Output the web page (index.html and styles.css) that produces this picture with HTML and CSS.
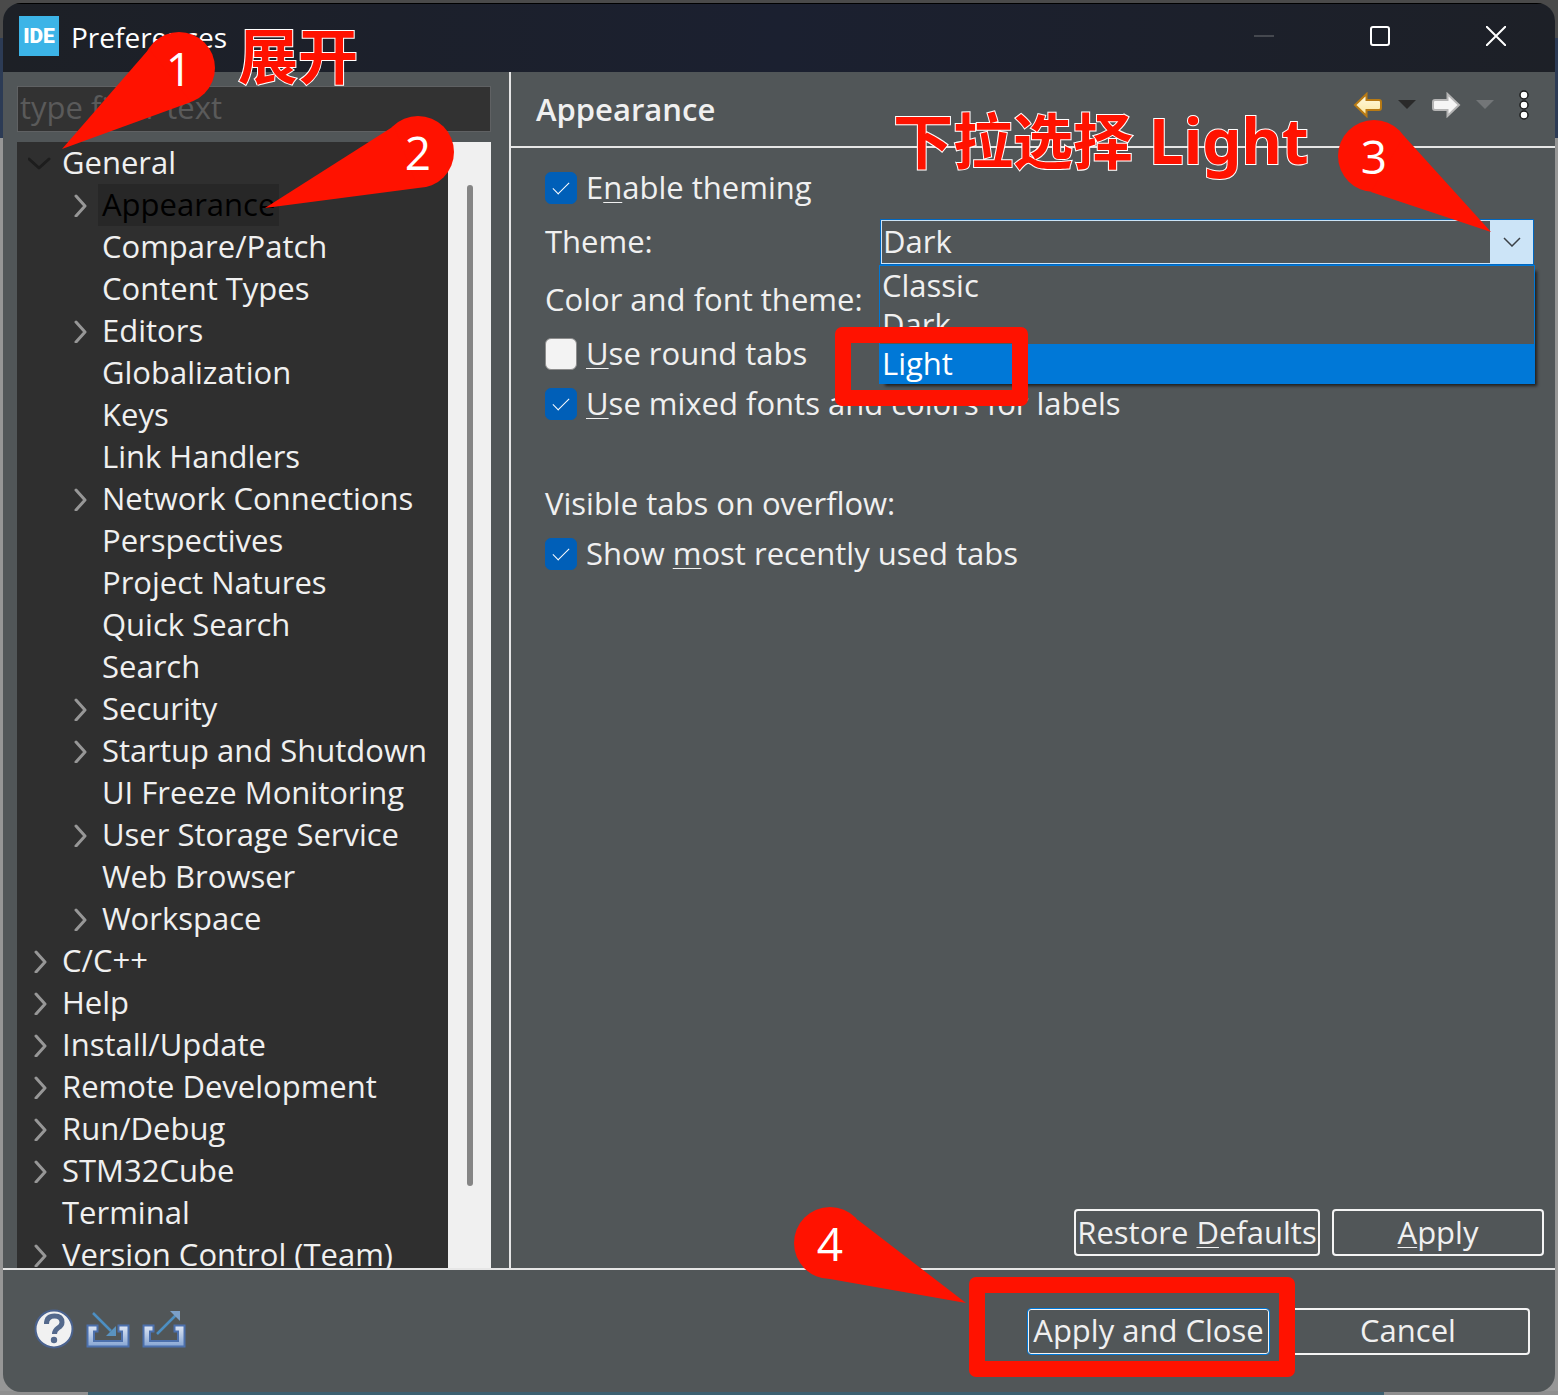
FILE: index.html
```html
<!DOCTYPE html>
<html lang="en">
<head>
<meta charset="utf-8">
<title>Preferences</title>
<link rel="stylesheet" href="styles.css">
</head>
<body>
<svg class="defs" aria-hidden="true">
  <symbol id="chev" viewBox="0 0 24 24"><path d="M8 3l9 10-9 10" fill="none" stroke="currentColor" stroke-width="3" stroke-linecap="round" stroke-linejoin="round"/></symbol>
  <linearGradient id="gold" x1="0" y1="0" x2="0" y2="1"><stop offset="0" stop-color="#fffbe6"/><stop offset="1" stop-color="#fbe59a"/></linearGradient>
  <linearGradient id="tray" x1="0" y1="0" x2="0" y2="1"><stop offset="0" stop-color="#dfe7f5"/><stop offset="1" stop-color="#86a5d3"/></linearGradient>
</svg>
<div class="window">
  <header class="titlebar">
    <span class="logo">IDE</span>
    <h1 class="title">Preferences</h1>
    <div class="controls">
      <button class="control dim" aria-label="Minimize"><svg width="20" height="20"><path d="M0 10h20" stroke="currentColor" stroke-width="2"/></svg></button>
      <button class="control" aria-label="Maximize"><svg width="20" height="20"><rect x="1" y="1" width="18" height="18" rx="2" fill="none" stroke="currentColor" stroke-width="2"/></svg></button>
      <button class="control" aria-label="Close"><svg width="20" height="20"><path d="M0 0l20 20M20 0L0 20" stroke="currentColor" stroke-width="2"/></svg></button>
    </div>
  </header>

  <div class="body">
    <aside class="sidebar">
      <input class="filter" type="text" placeholder="type filter text" aria-label="Filter">
      <div class="treebox">
        <ul class="tree">
          <li class="open"><svg class="chev"><use href="#chev"/></svg><span>General</span></li>
          <li class="sub selected"><svg class="chev"><use href="#chev"/></svg><span>Appearance</span></li>
          <li class="sub leaf"><span>Compare/Patch</span></li>
          <li class="sub leaf"><span>Content Types</span></li>
          <li class="sub"><svg class="chev"><use href="#chev"/></svg><span>Editors</span></li>
          <li class="sub leaf"><span>Globalization</span></li>
          <li class="sub leaf"><span>Keys</span></li>
          <li class="sub leaf"><span>Link Handlers</span></li>
          <li class="sub"><svg class="chev"><use href="#chev"/></svg><span>Network Connections</span></li>
          <li class="sub leaf"><span>Perspectives</span></li>
          <li class="sub leaf"><span>Project Natures</span></li>
          <li class="sub leaf"><span>Quick Search</span></li>
          <li class="sub leaf"><span>Search</span></li>
          <li class="sub"><svg class="chev"><use href="#chev"/></svg><span>Security</span></li>
          <li class="sub"><svg class="chev"><use href="#chev"/></svg><span>Startup and Shutdown</span></li>
          <li class="sub leaf"><span>UI Freeze Monitoring</span></li>
          <li class="sub"><svg class="chev"><use href="#chev"/></svg><span>User Storage Service</span></li>
          <li class="sub leaf"><span>Web Browser</span></li>
          <li class="sub"><svg class="chev"><use href="#chev"/></svg><span>Workspace</span></li>
          <li><svg class="chev"><use href="#chev"/></svg><span>C/C++</span></li>
          <li><svg class="chev"><use href="#chev"/></svg><span>Help</span></li>
          <li><svg class="chev"><use href="#chev"/></svg><span>Install/Update</span></li>
          <li><svg class="chev"><use href="#chev"/></svg><span>Remote Development</span></li>
          <li><svg class="chev"><use href="#chev"/></svg><span>Run/Debug</span></li>
          <li><svg class="chev"><use href="#chev"/></svg><span>STM32Cube</span></li>
          <li class="leaf"><span>Terminal</span></li>
          <li><svg class="chev"><use href="#chev"/></svg><span>Version Control (Team)</span></li>
        </ul>
        <div class="scrollbar"><div class="thumb"></div></div>
      </div>
    </aside>

    <main class="page">
      <div class="pagehead">
        <h2 class="heading">Appearance</h2>
        <div class="nav">
          <button class="icon" aria-label="Back"><svg width="30" height="26"><path d="M2 13L13.500 2v6H26q2 0 2 2v6q0 2-2 2H13.500v6z" fill="url(#gold)" stroke="#b87a14" stroke-width="2"/></svg></button>
          <button class="icon" aria-label="Back history"><svg width="18" height="10"><path d="M0 0h18l-9 9z" fill="#2a2a2a"/></svg></button>
          <button class="icon" aria-label="Forward"><svg width="30" height="26"><path d="M28 13L16.500 2v6H4q-2 0-2 2v6q0 2 2 2h12.500v6z" fill="#f5f5f5" stroke="#b5b5b5" stroke-width="2"/></svg></button>
          <button class="icon" aria-label="Forward history"><svg width="18" height="10"><path d="M0 0h18l-9 9z" fill="#737678"/></svg></button>
          <button class="icon more" aria-label="View menu"><svg width="10" height="30"><g fill="#fff" stroke="#1b1b1b" stroke-width="1.500"><circle cx="5" cy="5" r="4"/><circle cx="5" cy="15" r="4"/><circle cx="5" cy="25" r="4"/></g></svg></button>
        </div>
      </div>

      <form class="form">
        <label class="check"><input type="checkbox" checked><span>E<u>n</u>able theming</span></label>
        <label class="field" for="theme">Theme:</label>
        <div class="combo">
          <select id="theme"><option>Dark</option></select>
          <span class="drop"><svg width="18" height="10"><path d="M1 1l8 8 8-8" fill="none" stroke="#3b4146" stroke-width="1.500"/></svg></span>
          <ul class="options">
            <li>Classic</li>
            <li>Dark</li>
            <li class="active">Light</li>
          </ul>
          <span class="frame frame-light"></span>
        </div>
        <span class="field wide">Color and font theme:</span>
        <label class="check"><input type="checkbox"><span><u>U</u>se round tabs</span></label>
        <label class="check"><input type="checkbox" checked><span><u>U</u>se mixed fonts and colors for labels</span></label>
        <span class="blank"></span>
        <span class="caption">Visible tabs on overflow:</span>
        <label class="check"><input type="checkbox" checked><span>Show <u>m</u>ost recently used tabs</span></label>
      </form>

      <div class="pageactions">
        <button class="btn restore">Restore <u>D</u>efaults</button>
        <button class="btn apply"><u>A</u>pply</button>
      </div>
    </main>
  </div>

  <footer class="footer">
    <div class="tools">
      <button class="icon" aria-label="Help"><svg width="40" height="42" viewBox="0 0 40 42"><circle cx="20" cy="21" r="18.500" fill="#f1f1f1" stroke="#4a628e" stroke-width="2"/><path d="M12.500 16q0-8 8-8 7.500 0 7.500 6.500 0 3-4 5.500-3.500 2.500-3.500 6" fill="none" stroke="#54698c" stroke-width="5"/><circle cx="20" cy="32" r="3.200" fill="#54698c"/></svg></button>
      <button class="icon" aria-label="Import"><svg width="44" height="40" viewBox="0 0 44 40"><path d="M1.500 16.500h10v6H8V32h28v-9.500h-3.500v-6h10v21h-41z" fill="url(#tray)" stroke="#4c70ad" stroke-width="2"/><path d="M7 4l18 18" stroke="#4d8fc3" stroke-width="2.500"/><path d="M30 17v10H20z" fill="#5a92bf"/></svg></button>
      <button class="icon" aria-label="Export"><svg width="44" height="40" viewBox="0 0 44 40"><path d="M1.500 16.500h10v6H8V32h28v-9.500h-3.500v-6h10v21h-41z" fill="url(#tray)" stroke="#4c70ad" stroke-width="2"/><path d="M15 25L34 6" stroke="#4d8fc3" stroke-width="2.500"/><path d="M28 2h10v10z" fill="#7b9fc8"/></svg></button>
    </div>
    <div class="final">
      <button class="btn primary">Apply and Close</button>
      <button class="btn">Cancel</button>
      <span class="frame frame-close"></span>
    </div>
  </footer>

  <svg class="note note-left" width="480" height="220" role="img" aria-label="Steps 1 and 2">
    <g class="pin"><circle cx="176" cy="65" r="36"/><path d="M146 46L59 146 188 99z"/><circle cx="415" cy="149" r="36"/><path d="M391 123L262 205 415 185z"/></g>
    <text class="digit" x="176" y="83">1</text>
    <text class="digit" x="415" y="167">2</text>
    <text class="callout" x="235" y="76">展开</text>
  </svg>
  <svg class="note note-right" width="680" height="240" role="img" aria-label="Step 3">
    <g class="pin"><circle cx="499" cy="153" r="36"/><path d="M529 133L616 229 496 189z"/></g>
    <text class="digit" x="499" y="171">3</text>
    <text class="callout" x="18" y="161">下拉选择<tspan class="latin"> Light</tspan></text>
  </svg>
  <svg class="note note-bottom" width="180" height="110" role="img" aria-label="Step 4">
    <g class="pin"><circle cx="38" cy="38" r="36"/><path d="M66 15L174 98 38 74z"/></g>
    <text class="digit" x="38" y="56">4</text>
  </svg>
</div>
</body>
</html>
```

FILE: styles.css
```css
* {
  box-sizing: border-box;
}

body {
  margin: 0;
  padding: 3px;
  height: 100vh;
  background:
    linear-gradient(90deg, #8f8f8f 88px, #3d6070 88px, #3d6070 calc(100% - 174px), #8f8f8f calc(100% - 174px)) bottom / 100% 4px no-repeat,
    linear-gradient(#4a4a4a 38px, #2c3b55 38px, #2c3b55 138px, #969696 138px);
  color: #f0f0f0;
  font: 31px/40px "Open Sans", "Noto Sans", "Noto Sans CJK SC", sans-serif;
}

button, input, select {
  font: inherit;
  color: inherit;
}

button {
  padding: 0;
  border: 0;
  background: none;
}

svg {
  display: block;
  flex: none;
}

ul {
  margin: 0;
  padding: 0;
  list-style: none;
}

u {
  text-decoration-thickness: 1px;
  text-underline-offset: 3px;
}

.defs {
  position: absolute;
  width: 0;
  height: 0;
}

.window {
  position: relative;
  display: flex;
  flex-direction: column;
  height: 100%;
  overflow: hidden;
  border-radius: 18px;
  background: #515658;
}

/* Title bar */
.titlebar {
  display: flex;
  flex: none;
  align-items: center;
  gap: 12px;
  height: 69px;
  padding: 0 1px 4px 16px;
  background: linear-gradient(90deg, #1d2026, #1b2030 50%, #1d2027);
  border-top: 1px solid #000;
}

.logo {
  width: 40px;
  background: #3cb4e7;
  color: #fff;
  font: 900 21px/40px Roboto, sans-serif;
  text-align: center;
}

.title {
  margin: 0;
  padding-top: 2px;
  color: #fff;
  font-size: 28px;
  font-weight: 400;
}

.controls {
  display: flex;
  margin-left: auto;
}

.control {
  display: grid;
  place-items: center;
  width: 116px;
  height: 64px;
  color: #fff;
}

.control.dim {
  color: #45484f;
}

/* Sidebar */
.body {
  display: flex;
  flex: 1;
  min-height: 0;
}

.sidebar {
  display: flex;
  flex: none;
  flex-direction: column;
  gap: 10px;
  width: 508px;
  padding: 14px 18px 0 14px;
  border-right: 2px solid #e6e6e6;
}

.filter {
  flex: none;
  height: 46px;
  padding: 0 2px 4px;
  border: 1px solid #5f6163;
  background: #323232;
}

.filter::placeholder {
  color: #5a5a5a;
}

.treebox {
  display: flex;
  flex: 1;
  min-height: 0;
  overflow: hidden;
  background: #2f2f2f;
}

.tree {
  flex: 1;
}

.tree li {
  display: flex;
  align-items: center;
  height: 42px;
  padding-left: 11px;
  white-space: nowrap;
}

.tree .sub {
  padding-left: 51px;
}

.tree span {
  padding: 0 4px 2px;
  margin-left: 6px;
}

.tree .leaf {
  padding-left: 35px;
}

.tree .sub.leaf {
  padding-left: 75px;
}

.tree .selected span {
  background: #272727;
  color: #000;
}

.chev {
  width: 24px;
  height: 24px;
  color: #979797;
}

.open .chev {
  color: #1d1d1d;
  transform: rotate(90deg);
}

.scrollbar {
  flex: none;
  width: 43px;
  padding: 43px 18px 82px 19px;
  background: #f0f0f0;
}

.thumb {
  height: 100%;
  border-radius: 3px;
  background: #858585;
}

/* Page */
.page {
  display: flex;
  flex: 1;
  flex-direction: column;
  min-width: 0;
}

.pagehead {
  display: flex;
  flex: none;
  align-items: center;
  justify-content: space-between;
  height: 76px;
  padding: 0 26px 0 25px;
  border-bottom: 2px solid #e6e6e6;
}

.heading {
  margin: 0;
  font-size: 31px;
  font-weight: 600;
}

.nav {
  display: flex;
  align-items: center;
  gap: 15px;
  padding-bottom: 8px;
}

.more {
  margin-left: 10px;
}

.form {
  display: grid;
  grid-template-columns: 335px 1fr;
  gap: 8px 0;
  padding: 19px 21px 0 34px;
}

.check, .wide, .blank, .caption {
  grid-column: 1 / -1;
}

.check {
  display: flex;
  align-items: center;
  gap: 9px;
}

.check span, .caption {
  padding-bottom: 2px;
}

.field {
  line-height: 48px;
  padding-bottom: 2px;
}

.blank {
  height: 42px;
}

.check input {
  appearance: none;
  display: grid;
  flex: none;
  place-items: center;
  width: 32px;
  height: 32px;
  margin: 0;
  border: 1px solid #8c8c8c;
  border-radius: 6px;
  background: #f3f3f3;
}

.check input:checked {
  border-color: #005fb8;
  background: #005fb8;
}

.check input:checked::before {
  content: "";
  width: 15px;
  height: 7px;
  border: solid #fff;
  border-width: 0 0 1px 1px;
  transform: translateY(-2px) rotate(-45deg);
}

.combo {
  position: relative;
  align-self: center;
  height: 46px;
}

.combo select {
  appearance: none;
  width: 100%;
  height: 46px;
  padding: 0 2px 2px;
  border: 1px solid #0067c0;
  border-radius: 0;
  outline: 1px solid #cce4f7;
  outline-offset: -2px;
  background: #515658;
}

.drop {
  position: absolute;
  inset: 1px 1px 1px auto;
  display: grid;
  place-items: center;
  width: 43px;
  background: #cce4f7;
  pointer-events: none;
}

.options {
  position: absolute;
  top: 46px;
  left: -1px;
  right: -1px;
  border: 1px solid #0078d7;
  background: #515658;
  box-shadow: 4px 4px 3px -2px #1f1f1f;
  line-height: 39px;
}

.options li {
  padding: 0 2px;
}

.options .active {
  background: #0078d7;
  color: #fff;
}

.btn {
  height: 47px;
  padding-bottom: 2px;
  border: 2px solid #f4f4f4;
  border-radius: 4px;
  white-space: nowrap;
}

.pageactions {
  display: flex;
  justify-content: flex-end;
  gap: 12px;
  margin-top: auto;
  padding: 0 11px 12px;
}

.restore {
  width: 246px;
}

.apply {
  width: 212px;
}

/* Footer */
.footer {
  display: flex;
  flex: none;
  align-items: center;
  justify-content: space-between;
  height: 124px;
  padding: 0 25px 0 31px;
  border-top: 2px solid #e6e6e6;
}

.tools {
  display: flex;
  align-items: center;
  gap: 12px;
  padding-bottom: 4px;
}

.final {
  position: relative;
  display: grid;
  grid-template-columns: 243px 244px;
  gap: 16px;
}

.primary {
  border: 1px solid #0078d7;
  box-shadow: inset 0 0 0 1px #f4f4f4;
}

/* Tutorial marks laid over the window */
.frame {
  position: absolute;
  border: 16px solid #ff1200;
  border-radius: 7px;
  pointer-events: none;
}

.frame-light {
  top: 108px;
  left: -45px;
  width: 193px;
  height: 79px;
}

.frame-close {
  top: -31px;
  left: -58px;
  width: 326px;
  height: 100px;
}

.note {
  position: absolute;
  pointer-events: none;
}

.note-left {
  top: 0;
  left: 0;
}

.note-right {
  top: 0;
  right: 0;
}

.note-bottom {
  right: 583px;
  bottom: 77px;
}

.pin {
  fill: #ff1200;
}

.digit {
  fill: #fff;
  font-size: 46px;
  text-anchor: middle;
}

.callout {
  fill: #ff1200;
  stroke: #fff;
  stroke-width: 2px;
  paint-order: stroke;
  font: 700 60px "Noto Sans CJK SC", sans-serif;
}

.latin {
  font: 700 62px "Noto Sans", sans-serif;
}
```
